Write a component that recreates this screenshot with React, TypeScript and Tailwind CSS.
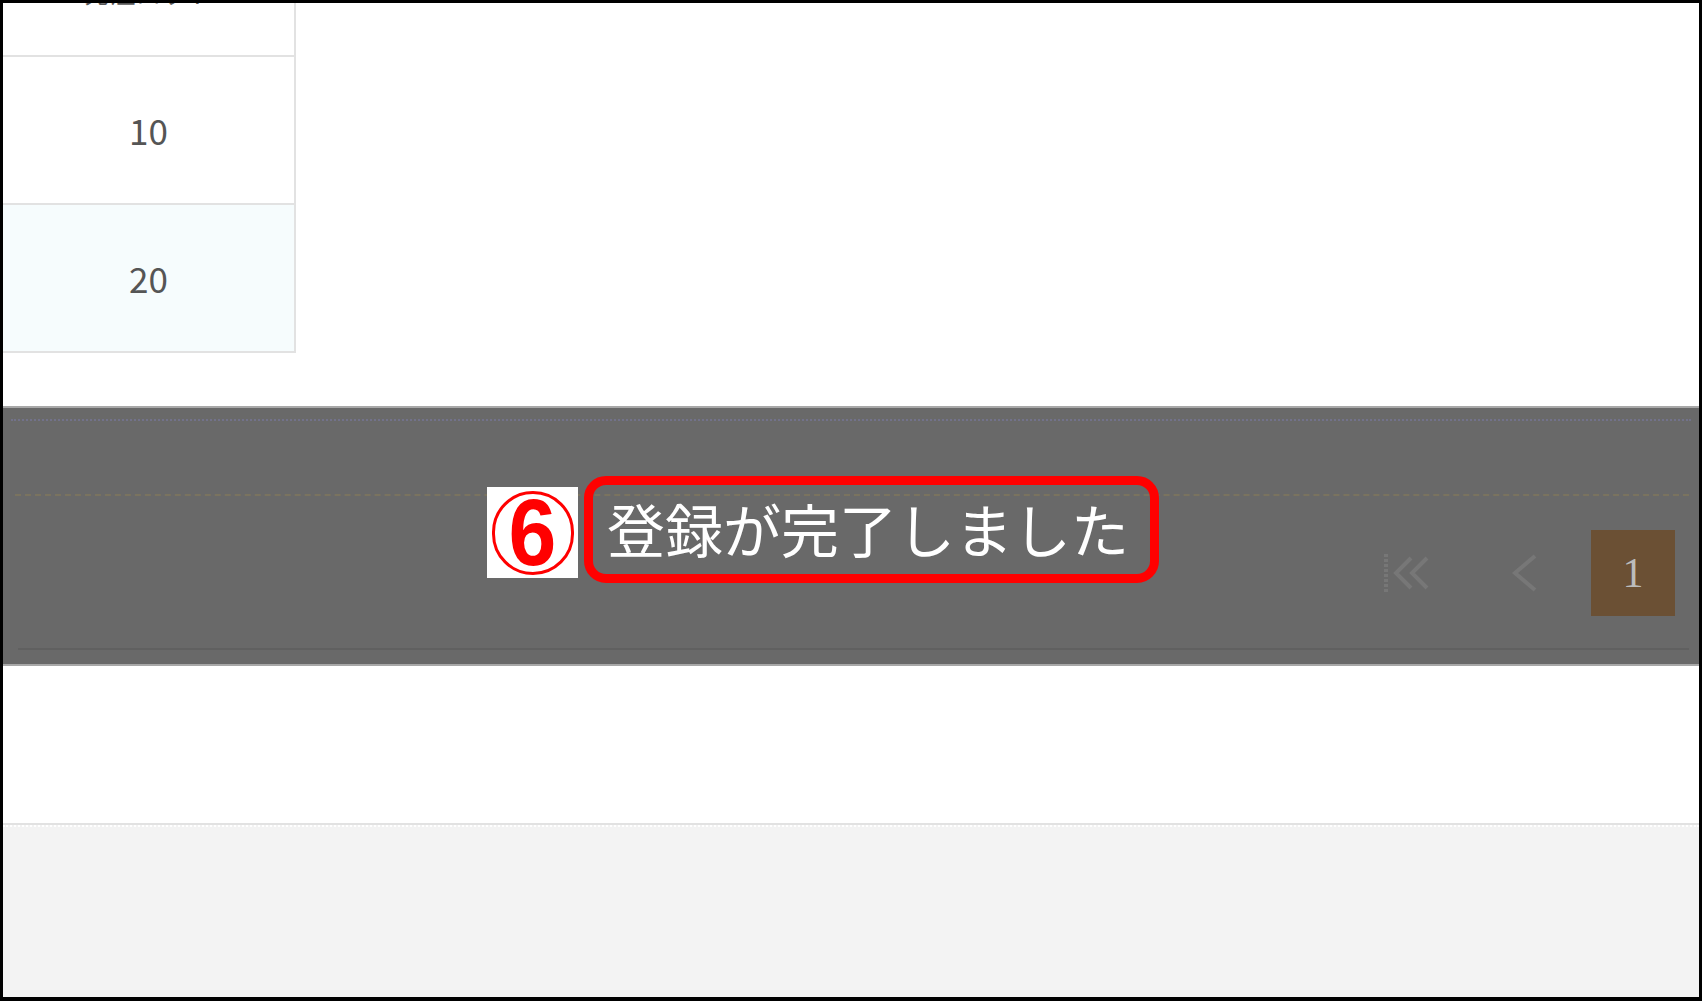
const rows = [
  { qty: "10", shade: false },
  { qty: "20", shade: true },
];

function FirstPageIcon() {
  return (
    <svg width="54" height="42" viewBox="0 0 54 42" fill="none">
      <path d="M3 2 V40" stroke="#777777" strokeWidth="4" strokeDasharray="3 2" />
      <path d="M28 6 L13 21 L28 36" stroke="#777777" strokeWidth="4" />
      <path d="M44 6 L29 21 L44 36" stroke="#777777" strokeWidth="4" />
    </svg>
  );
}

function PrevIcon() {
  return (
    <svg width="30" height="42" viewBox="0 0 30 42" fill="none">
      <path d="M26 4 L6 21 L26 38" stroke="#777777" strokeWidth="4" />
    </svg>
  );
}

export default function App() {
  return (
    <div
      className="relative w-[1702px] h-[1001px] border-[3px] border-b-4 border-black bg-white flex flex-col overflow-hidden"
      style={{ fontFamily: '"Noto Sans CJK JP", "Noto Sans", sans-serif' }}
    >
      {/* table fragment */}
      <div className="h-[403px] shrink-0">
        <div className="w-[293px] border-r-2 border-[#e2e2e2]">
          <div className="h-[54px] border-b-2 border-[#e2e2e2] overflow-hidden flex justify-center">
            <span className="-mt-[24px] text-[26px] leading-none text-[#555]">発注ロット</span>
          </div>
          {rows.map((r) => (
            <div
              key={r.qty}
              className={`h-[148px] border-b-2 border-[#e2e2e2] flex items-center justify-center text-[35px] text-[#555] ${
                r.shade ? "bg-[#f6fcfd]" : "bg-white"
              }`}
            >
              {r.qty}
            </div>
          ))}
        </div>
      </div>

      {/* dimmed toolbar band */}
      <div className="h-[260px] shrink-0 bg-[#696969] border-t-2 border-b-2 border-[#a8a8a8] flex flex-col">
        <div className="mt-[11px] mx-[8px] border-t-2 border-dotted border-[#72728a]" />
        <div className="mt-[73px] ml-[12px] mr-[10px] border-t-2 border-dashed border-[#7a735f]" />
        <div className="h-[154px] ml-[15px] mr-[10px] border-b-2 border-[#606060] flex items-center justify-end pr-[14px] pt-[2px]">
          <div className="flex items-center">
            <FirstPageIcon />
            <div className="ml-[72px]">
              <PrevIcon />
            </div>
            <div
              className="ml-[52px] w-[84px] h-[86px] bg-[#6b5034] flex items-center justify-center text-[42px] text-[#bcbcbc]"
              style={{ fontFamily: '"Liberation Serif", serif' }}
            >
              1
            </div>
          </div>
        </div>
      </div>

      {/* lower white area + footer */}
      <div className="h-[157px] shrink-0 bg-white" />
      <div className="flex-1 bg-[#f3f3f3] border-t-2 border-[#e2e2e2]">
        <div className="border-t-2 border-dotted border-white" />
      </div>

      {/* annotation overlay */}
      <div className="absolute left-[484px] top-[473px] flex items-start">
        <div className="mt-[11px] w-[91px] h-[91px] bg-white flex items-center justify-center">
          <div
            className="w-[82px] h-[84px] rounded-full border-[3px] border-[#ff0000] flex items-center justify-center text-[86px] font-bold leading-none text-[#ff0000]"
            style={{ fontFamily: '"Liberation Sans", sans-serif' }}
          >
            <span className="-mt-[2px] inline-block scale-y-110">6</span>
          </div>
        </div>
        <div className="ml-[6px] w-[575px] h-[107px] rounded-[22px] border-[9px] border-[#ff0000] flex items-center pl-[14px]">
          <span className="-mt-[4px] text-[58px] leading-none text-white whitespace-nowrap">登録が完了しました</span>
        </div>
      </div>
    </div>
  );
}
